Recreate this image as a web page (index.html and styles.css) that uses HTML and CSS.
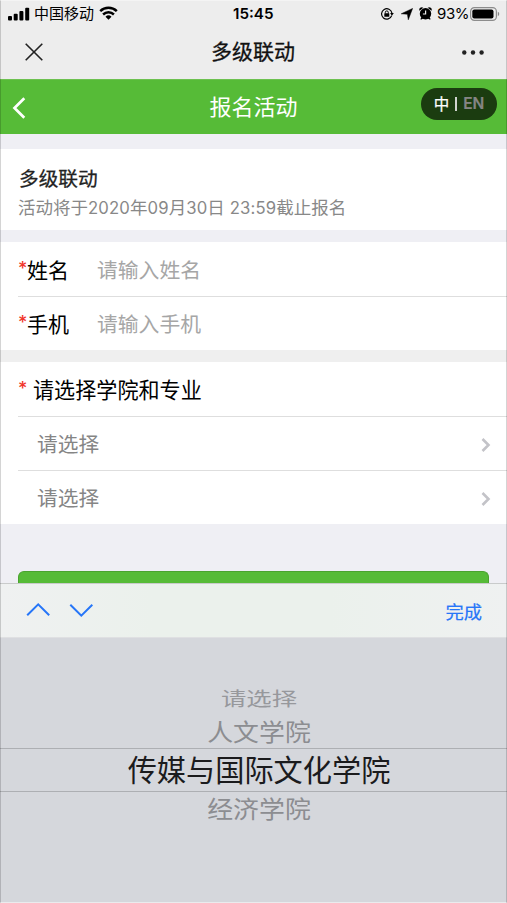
FILE: index.html
```
<!DOCTYPE html>
<html lang="zh-CN">
<head>
<meta charset="utf-8">
<meta name="viewport" content="width=device-width, initial-scale=1">
<title>多级联动</title>
<link rel="stylesheet" href="styles.css">
</head>
<body>
<div class="phone">
  <div class="status">
    <svg class="signal" width="22" height="14" viewBox="0 0 22 14"><rect x="0" y="9" width="4" height="4.5" rx="1"/><rect x="5.7" y="6.8" width="4" height="6.7" rx="1"/><rect x="11.4" y="4" width="4" height="9.500" rx="1"/><rect x="17.200" y="0.800" width="4" height="12.700" rx="1"/></svg>
    <span class="carrier">中国移动</span>
    <svg class="wifi" width="19" height="14" viewBox="0 0 19 14"><path d="M1.200 5.100a12 12 0 0 1 16.600 0M4.100 8.500a7.800 7.800 0 0 1 10.800 0" fill="none" stroke="#000" stroke-width="2.500"/><path d="M9.500 13.800l-3-3.100a4.300 4.300 0 0 1 6 0z"/></svg>
    <span class="time">15:45</span>
    <div class="indicators">
      <svg width="14" height="12" viewBox="0 0 14 12"><path d="M11.700 7.600A5.200 5.200 0 1 1 11.900 5" fill="none" stroke="#000" stroke-width="1.200"/><path d="M10.100 5h3.700l-1.900 2.700z"/><rect x="4.300" y="5.300" width="5" height="3.500" rx=".5"/><path d="M5.300 5.500V4.400a1.500 1.500 0 0 1 3 0v1.100" fill="none" stroke="#000"/></svg>
      <svg class="locate" width="12" height="12" viewBox="0 0 12 12"><path d="M11.600.4L7.300 11.800 6.400 6.200.2 5.800z" stroke="#000" stroke-width=".5" stroke-linejoin="round"/></svg>
      <svg class="alarm" width="13" height="13" viewBox="0 0 13 13"><circle cx="6.500" cy="6.700" r="5.700"/><path d="M.5 3.800a2.500 2.500 0 0 1 3.800-3zM12.500 3.800a2.500 2.500 0 0 0-3.800-3zM2.700 10l-1.500 2.300 1.400.3 2.100-1.500zM10.300 10l1.500 2.300-1.400.3-2.100-1.500z"/><path d="M6.600 3.600V7H3.900" fill="none" stroke="#ededed" stroke-width="1.200"/></svg>
      <span class="percent">93%</span>
      <svg class="battery" width="30" height="14" viewBox="0 0 30 14"><rect x=".6" y=".6" width="25.800" height="12.800" rx="3.800" fill="none" stroke="#8c8c8c" stroke-width="1.200"/><rect x="2.300" y="2.400" width="21.200" height="9.200" rx="2"/><path d="M27.800 4.800a2.400 2.400 0 0 1 0 4.400z" fill="#888"/></svg>
    </div>
  </div>
  <header class="nav">
    <svg class="close" width="18" height="18" viewBox="0 0 18 18"><path d="M.7.7l16.600 16.600M17.300.7L.7 17.300"/></svg>
    <h1>多级联动</h1>
    <svg class="more" width="22" height="5" viewBox="0 0 22 5"><circle cx="2.300" cy="2.500" r="2.200"/><circle cx="11" cy="2.500" r="2.200"/><circle cx="19.600" cy="2.500" r="2.200"/></svg>
  </header>
  <div class="banner">
    <svg class="back" width="14" height="22" viewBox="0 0 14 22"><path d="M12.300 1.300L2.500 11l9.800 9.700"/></svg>
    <h2>报名活动</h2>
    <div class="lang"><span class="zh">中</span><i></i><span class="en">EN</span></div>
  </div>
  <section class="intro">
    <h3>多级联动</h3>
    <p>活动将于<span>2020</span>年<span>09</span>月<span>30</span>日<span> 23:59</span>截止报名</p>
  </section>
  <section class="group">
    <label class="row"><b>*</b><span class="name">姓名</span><span class="hint">请输入姓名</span></label>
    <label class="row"><b>*</b><span class="name">手机</span><span class="hint">请输入手机</span></label>
  </section>
  <section class="group last">
    <div class="row question"><b>*</b><span>请选择学院和专业</span></div>
    <div class="row choice"><span>请选择</span><svg width="10" height="14" viewBox="0 0 10 14"><path d="M1.500 1l6 6-6 6"/></svg></div>
    <div class="row choice"><span>请选择</span><svg width="10" height="14" viewBox="0 0 10 14"><path d="M1.500 1l6 6-6 6"/></svg></div>
  </section>
  <div class="submit"></div>
  <div class="toolbar">
    <svg width="68" height="16" viewBox="0 0 68 16"><path d="M1.200 13.300L12.200 2.300l11 11M44.300 2.700l11 11 11-11"/></svg>
    <span>完成</span>
  </div>
  <div class="picker">
    <div class="option far">请选择</div>
    <div class="option near">人文学院</div>
    <div class="option selected">传媒与国际文化学院</div>
    <div class="option near below">经济学院</div>
  </div>
</div>
</body>
</html>
```
FILE: styles.css
```
* { box-sizing: border-box; }
body { margin: 0; font-family: Inter, "Noto Sans CJK SC", sans-serif; background: #efeff4; }
h1, h2, h3, p { margin: 0; }
svg { display: block; flex: none; }
.phone { width: 507px; height: 903px; display: flex; flex-direction: column; position: relative; overflow: hidden; }
.phone > * { flex: none; }
.phone::after { content: ""; position: absolute; inset: 0; border: 1px solid rgba(0,0,0,.17); border-top-color: rgba(255,255,255,.4); border-bottom-color: rgba(255,255,255,.5); }

.status { height: 28px; display: flex; align-items: center; background: #ededed; padding: 0 7px 0 8px; font-size: 15px; position: relative; }
.signal { margin-top: -1px; }
.carrier { margin-left: 4px; width: 61px; line-height: 20px; }
.wifi { margin-left: 4px; margin-top: -2px; }
.time { position: absolute; left: 233px; top: 4px; line-height: 20px; font-weight: 600; font-size: 15.200px; }
.indicators { margin-left: auto; display: flex; align-items: center; }
.indicators svg { margin-top: -1px; }
.indicators .locate { margin-left: 7px; }
.indicators .alarm { margin-left: 6px; }
.percent { margin-left: 5px; width: 32px; font-size: 15px; letter-spacing: -.4px; line-height: 20px; margin-top: -1px; }
.indicators .battery { margin-left: 1px; }

.nav { height: 51px; display: grid; grid-template-columns: 100px 1fr 100px; align-items: center; background: #ededed; color: #111; padding: 0 23px 3px 25px; }
.nav h1 { font-size: 21px; font-weight: 400; -webkit-text-stroke: .3px #111; line-height: 30px; text-align: center; margin-left: -3px; }
.close { fill: none; stroke: #222; stroke-width: 1.600; }
.more { justify-self: end; fill: #222; }

.banner { height: 55px; background: #56bb37; color: #fff; position: relative; display: flex; align-items: center; justify-content: center; border-top: 1px solid #6dc150; }
.banner h2 { font-size: 22px; font-weight: 400; line-height: 32px; }
.back { position: absolute; left: 12px; top: 17px; fill: none; stroke: #fff; stroke-width: 2.700; }
.lang { position: absolute; left: 421px; top: 8px; width: 76px; height: 32px; border-radius: 16px; background: #1b3c10; display: flex; align-items: center; justify-content: center; font-size: 15.500px; padding-bottom: 1px; }
.lang .zh { -webkit-text-stroke: .25px #fff; margin-top: -2px; }
.lang i { width: 2px; height: 14px; background: #d0d4cf; margin: 1px 6px 0; }
.lang .en { color: #858585; font-weight: 600; -webkit-text-stroke: .2px #858585; }

.intro { height: 81px; margin-top: 15px; background: #fff; padding: 16px 18px 0 19px; }
.intro h3 { font-size: 19.700px; font-weight: 400; -webkit-text-stroke: .3px #222; line-height: 28px; color: #222; }
.intro p { font-size: 17.500px; line-height: 25px; color: #888; margin: 2px 0 0 -1px; white-space: pre; }
.intro p span { font-size: 16.700px; letter-spacing: .15px; }

.group { margin-top: 12px; background: #fff; font-size: 21px; }
.row { height: 54px; margin-left: 18px; display: flex; align-items: center; line-height: 30px; padding-top: 3px; }
.row + .row { border-top: 1px solid #dedede; padding-top: 2px; }
.row b { width: 9px; font-weight: 500; font-size: 18px; color: #f1352b; margin-top: -3px; }
.name { width: 70px; }
.hint { font-size: 20.800px; color: #a6a6a6; }
.last { box-shadow: 0 -12px 0 #efefef; }
.question { font-size: 21.100px; }
.question b { width: 15px; margin-top: -3px; }
.row.choice { padding: 2px 16px 0 19px; justify-content: space-between; color: #858585; font-size: 20.700px; }
.choice svg { fill: none; stroke: #c3c3c8; stroke-width: 2.600; }

.submit { height: 12px; margin: 47px 18px 0; border-radius: 6px 6px 0 0; background: #56bb37; border: 1px solid #4aa32f; border-bottom: 0; }
.toolbar { height: 54px; display: flex; align-items: center; justify-content: space-between; padding: 0 25px 0 26px; background: linear-gradient(90deg, #eff1f1, #ebf1ec 30%, #ebf1ec 65%, #eff1f1); border-top: 1px solid #c9cbcb; }
.toolbar svg { fill: none; stroke: #2676f8; stroke-width: 2; margin-top: -1px; }
.toolbar span { font-size: 18.300px; -webkit-text-stroke: .2px #2676f8; color: #2676f8; line-height: 26px; padding-top: 2px; }

.picker { height: 266px; background: #d5d7dc; border-top: 1px solid #dfe0e2; padding: 46px 0 0 11px; text-align: center; }
.option { color: #8c8d91; white-space: nowrap; }
.far { font-size: 25.400px; height: 29px; line-height: 29px; transform: scaleY(.76); color: #97989c; }
.near { font-size: 25.900px; height: 35px; line-height: 39px; transform: scaleY(.92); }
.selected { height: 44px; line-height: 44px; font-size: 29.200px; color: #1b1b1d; border: solid #adafb3; border-width: 1px 0; margin-left: -11px; padding-left: 11px; }
.below { line-height: 35px; }
```
